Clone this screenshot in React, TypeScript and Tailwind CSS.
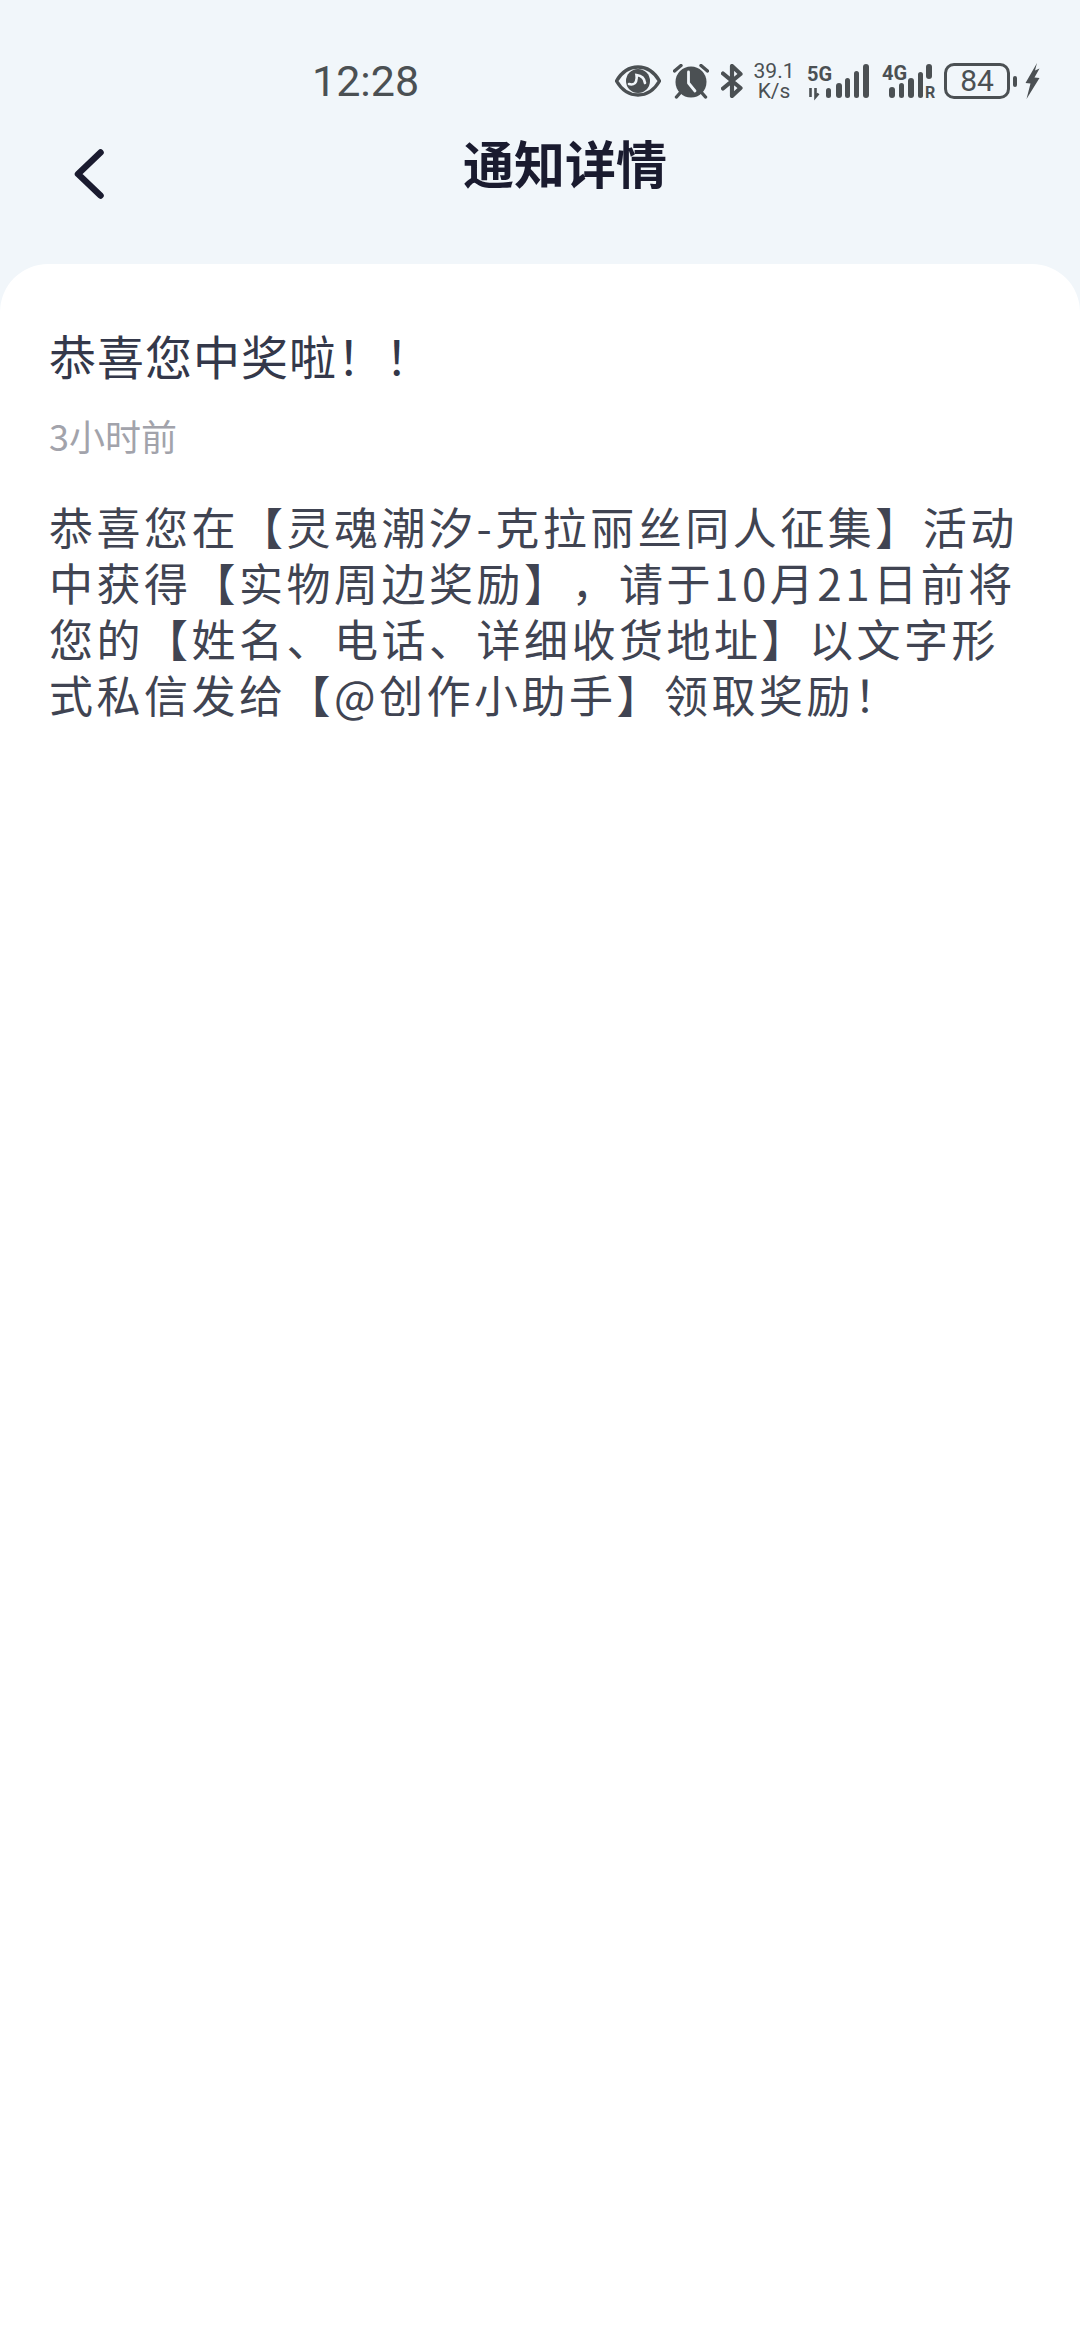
import React from 'react';

const ink = '#4b5053';

const StatusIcons = () => (
  <div className="flex items-center">
    {/* eye */}
    <svg width="46" height="32" viewBox="0 0 46 32">
      <path d="M1.500 16C7 6.500 14.500 2 23 2s16 4.500 21.500 14C39 25.500 31.500 30 23 30S7 25.500 1.500 16Z" fill="none" stroke={ink} strokeWidth="3.400" strokeLinejoin="round" />
      <circle cx="23" cy="16" r="12" fill={ink} />
      <path d="M14 19c3 1 6 0 7-2.500s1-4 .5-6.500c4 .5 8 3 8.500 8" fill="none" stroke="#f1f6fa" strokeWidth="2.600" strokeLinecap="round" />
    </svg>
    {/* alarm */}
    <svg width="36" height="35" viewBox="0 0 36 35" className="ml-3">
      <path d="M1.500 7 8 1.500M34.500 7 28 1.500M7 29l-3.500 4M29 29l3.500 4" stroke={ink} strokeWidth="3.400" strokeLinecap="round" />
      <circle cx="18" cy="18" r="15.500" fill={ink} />
      <path d="M15.500 8v11l6.500 8" fill="none" stroke="#f1f6fa" strokeWidth="2.800" strokeLinecap="round" strokeLinejoin="round" />
    </svg>
    {/* bluetooth */}
    <svg width="22" height="34" viewBox="0 0 22 34" className="ml-3">
      <path d="M2 9.500 19.500 24 11 32V2l8.500 8L2 24.500" fill="none" stroke={ink} strokeWidth="4.200" strokeLinecap="round" strokeLinejoin="round" />
    </svg>
    {/* net speed */}
    <div className="ml-[11px] flex w-[40px] flex-col items-center font-['Roboto',sans-serif] text-[21px] leading-[20px] text-[#4b5053]">
      <span>39.1</span>
      <span>K/s</span>
    </div>
    {/* 5G signal */}
    <svg width="62" height="36" viewBox="0 0 62 36" className="ml-[13px] overflow-visible">
      <text x="0" y="18" fontFamily="Roboto, sans-serif" fontWeight="700" fontSize="20" fill={ink}>5G</text>
      <path d="M3.500 25v9M8.500 25v9l3-3.500" stroke={ink} strokeWidth="2.600" fill="none" />
      <rect x="19" y="25" width="5" height="10" rx="2.500" fill={ink} />
      <rect x="29" y="20" width="6" height="15" rx="3" fill={ink} />
      <rect x="38" y="15" width="5" height="20" rx="2.500" fill={ink} />
      <rect x="47" y="8" width="5" height="27" rx="2.500" fill={ink} />
      <rect x="56" y="1" width="6" height="34" rx="3" fill={ink} />
    </svg>
    {/* 4G signal */}
    <svg width="52" height="36" viewBox="0 0 52 36" className="ml-[13px] overflow-visible">
      <text x="0" y="17" fontFamily="Roboto, sans-serif" fontWeight="700" fontSize="20" fill={ink}>4G</text>
      <rect x="7" y="24" width="6" height="11" rx="3" fill={ink} />
      <rect x="17" y="20" width="5" height="15" rx="2.500" fill={ink} />
      <rect x="26" y="15" width="6" height="20" rx="3" fill={ink} />
      <rect x="36" y="9" width="5" height="26" rx="2.500" fill={ink} />
      <rect x="44" y="1" width="6" height="15" rx="3" fill={ink} />
      <text x="43" y="35" fontFamily="Roboto, sans-serif" fontWeight="700" fontSize="16" fill={ink}>R</text>
    </svg>
    {/* battery */}
    <div className="ml-[10px] flex h-[36px] w-[66px] items-center justify-center rounded-[10px] border-[3px] border-[#4b5053] font-['Roboto',sans-serif] text-[30px] leading-none text-[#4b5053]">
      84
    </div>
    <div className="ml-[3px] h-[11px] w-[4px] rounded-[2px] bg-[#4b5053]" />
    <svg width="15" height="36" viewBox="0 0 15 36" className="ml-[8px]">
      <path d="M12 0 .5 20l5 .5L1.500 36 14.500 15l-5-.5 5-9-4.500 2Z" fill={ink} />
    </svg>
  </div>
);

const App = () => {
  return (
    <div className="flex min-h-[2340px] w-[1080px] flex-col bg-[#f1f6fa] font-['Noto_Sans_CJK_SC',sans-serif]">
      {/* status bar */}
      <div className="mt-[61px] flex h-[40px] items-center justify-between pl-[312px] pr-[40px]">
        <span className="font-['Roboto',sans-serif] text-[43px] leading-[44px] text-[#4b5053]">12:28</span>
        <StatusIcons />
      </div>

      {/* nav */}
      <div className="mt-[26px] flex h-[70px] items-center pl-[74px]">
        <svg width="30" height="50" viewBox="0 0 30 50" fill="none" className="mt-[24px]">
          <path d="M26.500 3.500 4 25l22.500 21.500" stroke="#1a1b2f" strokeWidth="6.500" strokeLinecap="round" strokeLinejoin="round" />
        </svg>
        <h1 className="ml-[359px] text-[51px] leading-[70px] font-bold text-[#1a1b2f]">通知详情</h1>
      </div>

      {/* card */}
      <div className="mt-[67px] flex-1 rounded-t-[48px] bg-white px-[49px] pt-[58px]">
        <div className="text-[47px] leading-[66px] tracking-[1px] text-[#34384a]">恭喜您中奖啦！！</div>
        <div className="mt-[24px] text-[36px] leading-[46px] text-[#a2a3ab]">3小时前</div>
        <p className="mt-[40px] text-[44px] leading-[56px] tracking-[3.5px] text-[#404452] [text-spacing-trim:space-all]">
          恭喜您在【灵魂潮汐-克拉丽丝同人征集】活动中获得【实物周边奖励】，请于10月21日前将您的【姓名、电话、详细收货地址】以文字形式私信发给【@创作小助手】领取奖励！
        </p>
      </div>
    </div>
  );
};

export default App;
